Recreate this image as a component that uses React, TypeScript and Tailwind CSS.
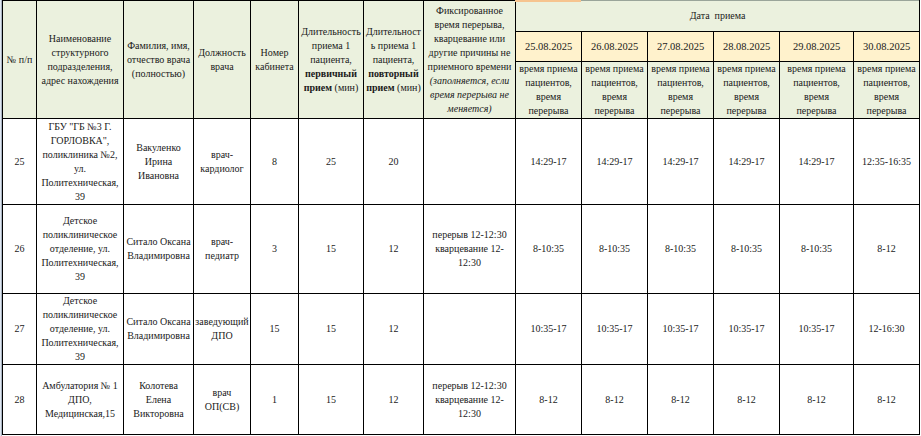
import React from "react";

const dates = ["25.08.2025", "26.08.2025", "27.08.2025", "28.08.2025", "29.08.2025", "30.08.2025"];

// column widths, left to right
const colWidths = [34, 87, 70, 57, 48, 65, 60, 92, 66, 66, 66, 66, 74, 66];

type Row = {
  n: string;
  org: string[];
  fio: string[];
  pos: string[];
  cab: string;
  first: string;
  repeat: string;
  brk: string[];
  times: string[];
  h: string;
};

const rows: Row[] = [
  {
    n: "25",
    org: ["ГБУ \"ГБ №3 Г.", "ГОРЛОВКА\",", "поликлиника №2,", "ул.", "Политехническая,", "39"],
    fio: ["Вакуленко", "Ирина", "Ивановна"],
    pos: ["врач-", "кардиолог"],
    cab: "8",
    first: "25",
    repeat: "20",
    brk: [],
    times: ["14:29-17", "14:29-17", "14:29-17", "14:29-17", "14:29-17", "12:35-16:35"],
    h: "h-[86px]",
  },
  {
    n: "26",
    org: ["Детское", "поликлиническое", "отделение, ул.", "Политехническая,", "39"],
    fio: ["Ситало Оксана", "Владимировна"],
    pos: ["врач-", "педиатр"],
    cab: "3",
    first: "15",
    repeat: "12",
    brk: ["перерыв 12-12:30", "кварцевание 12-", "12:30"],
    times: ["8-10:35", "8-10:35", "8-10:35", "8-10:35", "8-10:35", "8-12"],
    h: "h-[89px]",
  },
  {
    n: "27",
    org: ["Детское", "поликлиническое", "отделение, ул.", "Политехническая,", "39"],
    fio: ["Ситало Оксана", "Владимировна"],
    pos: ["заведующий", "ДПО"],
    cab: "15",
    first: "15",
    repeat: "12",
    brk: [],
    times: ["10:35-17", "10:35-17", "10:35-17", "10:35-17", "10:35-17", "12-16:30"],
    h: "h-[71px]",
  },
  {
    n: "28",
    org: ["Амбулатория № 1", "ДПО,", "Медицинская,15"],
    fio: ["Колотева", "Елена", "Викторовна"],
    pos: ["врач", "ОП(СВ)"],
    cab: "1",
    first: "15",
    repeat: "12",
    brk: ["перерыв 12-12:30", "кварцевание 12-", "12:30"],
    times: ["8-12", "8-12", "8-12", "8-12", "8-12", "8-12"],
    h: "h-[70px]",
  },
];

function Lines({ items }: { items: string[] }) {
  return (
    <>
      {items.map((t, i) => (
        <div key={i} className="whitespace-nowrap">
          {t}
        </div>
      ))}
    </>
  );
}

const cell = "border border-black px-0 text-center align-middle";
const head = "border border-black px-0 text-center align-middle bg-[#ebf1de]";

export default function App() {
  return (
    <div className="flex w-[921px] h-[436px] bg-white font-['Liberation_Serif',serif] text-[10px] leading-[14px] text-[#1a1a1a] overflow-hidden">
      {/* sheet gutter on the left */}
      <div className="w-[2px] shrink-0 bg-[#dfe7f1] border-r border-[#a9b4c2]" />

      <div className="relative">
        {/* highlight above the first date column */}
        <div className="absolute left-[513px] top-0 w-[66px] h-[2px] bg-[#f6c48f]" />

        <table className="table-fixed border-collapse w-[918px] border-t border-t-[#9aa59a]">
          <colgroup>
            {colWidths.map((w, i) => (
              <col key={i} style={{ width: w }} />
            ))}
          </colgroup>
          <thead>
            <tr className="h-[31px]">
              <th rowSpan={3} className={head + " font-normal"}>
                № п/п
              </th>
              <th rowSpan={3} className={head + " font-normal"}>
                <Lines items={["Наименование", "структурного", "подразделения,", "адрес нахождения"]} />
              </th>
              <th rowSpan={3} className={head + " font-normal"}>
                <Lines items={["Фамилия, имя,", "отчество врача", "(полностью)"]} />
              </th>
              <th rowSpan={3} className={head + " font-normal"}>
                <Lines items={["Должность", "врача"]} />
              </th>
              <th rowSpan={3} className={head + " font-normal"}>
                <Lines items={["Номер", "кабинета"]} />
              </th>
              <th rowSpan={3} className={head + " font-normal"}>
                <Lines items={["Длительность", "приема 1", "пациента,"]} />
                <div className="font-bold">первичный</div>
                <div className="whitespace-nowrap">
                  <span className="font-bold">прием</span> (мин)
                </div>
              </th>
              <th rowSpan={3} className={head + " font-normal"}>
                <Lines items={["Длительност", "ь приема 1", "пациента,"]} />
                <div className="font-bold">повторный</div>
                <div className="whitespace-nowrap">
                  <span className="font-bold">прием</span> (мин)
                </div>
              </th>
              <th rowSpan={3} className={head + " font-normal"}>
                <Lines
                  items={["Фиксированное", "время перерыва,", "кварцевание или", "другие причины не", "приемного времени"]}
                />
                <div className="italic">
                  <Lines items={["(заполняется, если", "время перерыва не", "меняется)"]} />
                </div>
              </th>
              <th colSpan={6} className={head + " font-normal border-t-[#9aa59a]"}>
                Дата&nbsp;&nbsp;приема
              </th>
            </tr>
            <tr className="h-[30px]">
              {dates.map((d) => (
                <th key={d} className={cell + " font-normal bg-[#fff2cc] text-[10.5px]"}>
                  {d}
                </th>
              ))}
            </tr>
            <tr className="h-[56px]">
              {dates.map((d) => (
                <th key={d} className={head + " font-normal"}>
                  <Lines items={["время приема", "пациентов,", "время", "перерыва"]} />
                </th>
              ))}
            </tr>
          </thead>
          <tbody>
            {rows.map((r) => (
              <tr key={r.n} className={r.h}>
                <td className={cell}>{r.n}</td>
                <td className={cell}>
                  <Lines items={r.org} />
                </td>
                <td className={cell}>
                  <Lines items={r.fio} />
                </td>
                <td className={cell}>
                  <Lines items={r.pos} />
                </td>
                <td className={cell}>{r.cab}</td>
                <td className={cell}>{r.first}</td>
                <td className={cell}>{r.repeat}</td>
                <td className={cell}>
                  <Lines items={r.brk} />
                </td>
                {r.times.map((t, i) => (
                  <td key={i} className={cell}>
                    {t}
                  </td>
                ))}
              </tr>
            ))}
          </tbody>
        </table>
      </div>
    </div>
  );
}
